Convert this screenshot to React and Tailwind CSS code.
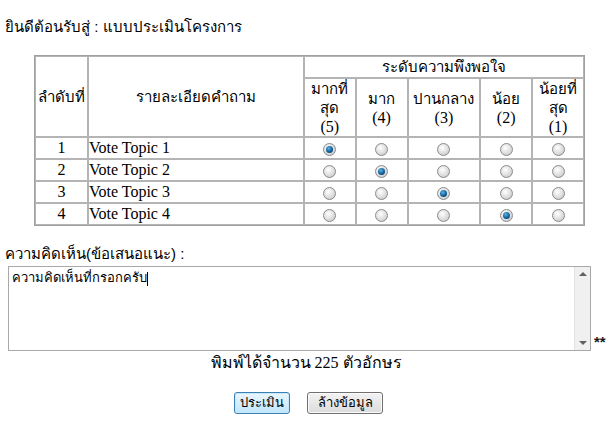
import { useState } from 'react';

const levels = [
    { th: ['มากที่', 'สุด'], n: 5 },
    { th: ['มาก'], n: 4 },
    { th: ['ปานกลาง'], n: 3 },
    { th: ['น้อย'], n: 2 },
    { th: ['น้อยที่', 'สุด'], n: 1 },
];

const topics = [
    { id: 1, name: 'Vote Topic 1', pick: 5 },
    { id: 2, name: 'Vote Topic 2', pick: 4 },
    { id: 3, name: 'Vote Topic 3', pick: 3 },
    { id: 4, name: 'Vote Topic 4', pick: 2 },
];

const Radio = ({ checked }) => (
    <span className="inline-flex items-center justify-center w-[13px] h-[13px] rounded-full border border-[#8a8a8a] bg-[radial-gradient(circle_at_40%_35%,#ffffff,#d4d4d4_70%,#b8b8b8)] align-middle">
        {checked && <span className="w-[7px] h-[7px] rounded-full bg-[radial-gradient(circle_at_40%_35%,#5fb2e6,#0f5f97_55%,#08365c)]"></span>}
    </span>
);

const cell = "border border-[#b4b4b4]";

const App = () => {
    const [answers] = useState(topics.map(t => t.pick));

    return (
        <div className="w-[610px] h-[431px] bg-white text-black font-['Liberation_Serif',serif] text-[16px] leading-[20px] overflow-hidden">
            <div className="pt-[17px] pl-[5px] font-['Liberation_Sans',sans-serif] text-[15px]">ยินดีต้อนรับสู่ : แบบประเมินโครงการ</div>

            <div className="pl-[34px] pt-[18px]">
                <table className="w-[551px] border-separate border-spacing-0 border border-[#a0a0a0]">
                    <thead>
                        <tr className="h-[21px]">
                            <th rowSpan={2} className={`${cell} w-[53px] font-normal font-['Liberation_Sans',sans-serif] text-[15px] whitespace-nowrap`}>ลำดับที่</th>
                            <th rowSpan={2} className={`${cell} w-[217px] font-normal font-['Liberation_Sans',sans-serif] text-[15px]`}>รายละเอียดคำถาม</th>
                            <th colSpan={5} className={`${cell} font-normal font-['Liberation_Sans',sans-serif] text-[15px]`}>ระดับความพึงพอใจ</th>
                        </tr>
                        <tr className="h-[59px]">
                            {levels.map((l, i) => (
                                <th key={l.n} className={`${cell} font-normal ${i === 2 ? 'w-[73px]' : 'w-[52px]'}`}>
                                    {l.th.map(t => (
                                        <div key={t} className="font-['Liberation_Sans',sans-serif] text-[15px] leading-[19px]">{t}</div>
                                    ))}
                                    <div className="leading-[19px]">({l.n})</div>
                                </th>
                            ))}
                        </tr>
                    </thead>
                    <tbody>
                        {topics.map((t, r) => (
                            <tr key={t.id} className="h-[22px]">
                                <td className={`${cell} text-center`}>{t.id}</td>
                                <td className={`${cell} pl-0`}>{t.name}</td>
                                {levels.map(l => (
                                    <td key={l.n} className={`${cell} text-center leading-none`}>
                                        <Radio checked={answers[r] === l.n} />
                                    </td>
                                ))}
                            </tr>
                        ))}
                    </tbody>
                </table>
            </div>

            <div className="pt-[18px] pl-[5px] font-['Liberation_Sans',sans-serif] text-[15px] leading-[20px]">ความคิดเห็น(ข้อเสนอแนะ) :</div>

            <div className="flex items-end pl-[8px] pt-[2px]">
                <div className="flex w-[583px] h-[85px] border border-[#a9a9a9] bg-white">
                    <div className="flex-1 pl-[3px] pt-[2px] font-['Liberation_Sans',sans-serif] text-[13px] leading-[18px]">
                        ความคิดเห็นที่กรอกครับ<span className="inline-block w-px h-[14px] bg-black align-middle"></span>
                    </div>
                    <div className="w-[16px] bg-[#f0f0f0] border-l border-[#e2e2e2] flex flex-col justify-between items-center py-[5px]">
                        <span className="w-0 h-0 border-l-[4px] border-r-[4px] border-b-[4px] border-l-transparent border-r-transparent border-b-[#606060]"></span>
                        <span className="w-0 h-0 border-l-[4px] border-r-[4px] border-t-[4px] border-l-transparent border-r-transparent border-t-[#606060]"></span>
                    </div>
                </div>
                <span className="ml-[3px] mb-[2px] text-[15px] leading-none font-bold font-['Liberation_Sans',sans-serif] text-[#1a1a1a]">**</span>
            </div>

            <div className="text-center pt-[2px] pl-[2px]">พิมพ์ได้จำนวน 225 ตัวอักษร</div>

            <div className="flex justify-center gap-[17px] pt-[19px] pl-[7px]">
                <button className="h-[22px] w-[56px] text-[13px] font-['Liberation_Sans',sans-serif] rounded-[3px] border border-[#3c7fb1] bg-[linear-gradient(#eaf6fd,#bee6fd)] shadow-[inset_0_0_0_1px_#c6e8fc]">ประเมิน</button>
                <button className="h-[22px] w-[76px] text-[13px] font-['Liberation_Sans',sans-serif] rounded-[3px] border border-[#707070] bg-[linear-gradient(#f2f2f2,#dcdcdc)] shadow-[inset_0_0_0_1px_#fbfbfb]">ล้างข้อมูล</button>
            </div>
        </div>
    );
};

export default App;
